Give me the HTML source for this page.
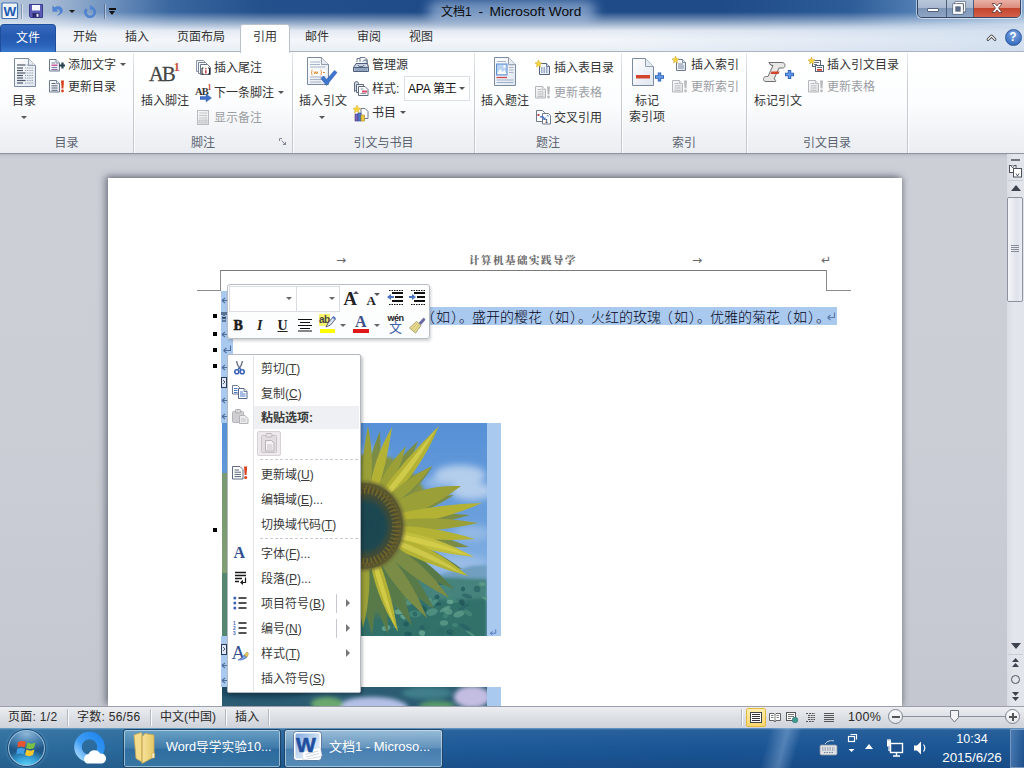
<!DOCTYPE html>
<html lang="zh-CN">
<head>
<meta charset="utf-8">
<title>文档1 - Microsoft Word</title>
<style>
*{box-sizing:border-box;margin:0;padding:0}
html,body{width:1024px;height:768px;overflow:hidden;background:#fff}
body{font-family:"Liberation Sans","Noto Sans CJK SC",sans-serif;font-size:12px;color:#222;position:relative}
.abs{position:absolute}
#titlebar{left:0;top:0;width:1024px;height:54px;
 background:
 linear-gradient(to bottom,rgba(255,255,255,0) 0px,rgba(255,255,255,0) 12px,rgba(240,244,250,.5) 22px,rgba(244,247,251,.93) 31px,#f3f6fa 40px,#e9eef5 52px),
 linear-gradient(to right,#b4c5da 0px,#a6bad3 50px,#6e91be 110px,#3a679f 170px,#24508c 260px,#1f4b88 420px,#1f4b88 720px,#2d5c98 850px,#5682b6 925px,#88aad0 1024px);}
#title{left:0;top:4px;width:1024px;height:16px;line-height:16px;color:#0a0a0a;white-space:nowrap}
#titleglow{left:428px;top:1px;width:168px;height:21px;border-radius:10px;background:rgba(200,220,245,.55);filter:blur(6px)}
#tabs{left:0;top:24px;width:1024px;height:28px}
.tab{position:absolute;top:0;height:28px;line-height:27px;font-size:12px;color:#333;text-align:center}
#filetab{left:0;top:24px;width:56px;height:28px;border-radius:4px 4px 0 0;background:linear-gradient(#3669be,#2559af 45%,#2a63ba 75%,#3a78cc);border:1px solid #1f4f9c;border-bottom:none;color:#fff;font-size:12px;text-align:center;line-height:26px}
#acttab{left:240px;top:24px;width:50px;height:29px;background:#fff;border:1px solid #b9c1cd;border-bottom:none;border-radius:3px 3px 0 0}
#ribbon{left:0;top:51px;width:1024px;height:103px;background:linear-gradient(#ffffff 0,#fcfdfe 50px,#f1f3f6 80px,#eaedf1 101px);border-top:1px solid #aab3c0;border-bottom:1px solid #8f959f}
.gsep{position:absolute;top:53px;width:1px;height:100px;background:linear-gradient(rgba(205,210,217,.5),#c9cdd5 30%,#c3c8d0 85%,#c3c8d0);box-shadow:1px 0 0 rgba(255,255,255,.8)}
.glabel{position:absolute;top:135px;height:16px;line-height:16px;font-size:12px;color:#5a6270;text-align:center}
.rt{position:absolute;font-size:12px;line-height:16px;color:#333;white-space:nowrap}
.dis{color:#9a9da3}
.darr{position:absolute;width:0;height:0;border-left:3px solid transparent;border-right:3px solid transparent;border-top:3px solid #555}
.tab{white-space:nowrap}
#docbg{left:0;top:154px;width:1024px;height:552px;background:linear-gradient(to bottom,#b4b8c1 0,#c6c9d0 2px,#cccfd6 5px,#cbced5 50%,#c4c7cf 100%)}
#page{left:108px;top:178px;width:794px;height:528px;background:#fff;box-shadow:-3px -2px 7px rgba(70,75,92,.6),2px 0 5px rgba(70,75,92,.35)}
#statusbar{left:0;top:706px;width:1024px;height:22px;background:linear-gradient(#eceef1,#dcdfe4 50%,#cfd3da);border-top:1px solid #9aa0ab}
#taskbar{left:0;top:728px;width:1024px;height:40px;background:linear-gradient(rgba(140,185,220,.75) 0,rgba(255,255,255,.06) 2px,rgba(255,255,255,0) 50%,rgba(0,0,30,.12) 100%),linear-gradient(to right,#2c6d9d 0,#27679b 200px,#1d5a98 460px,#1a5595 700px,#1b5694 1024px)}

.hdr{font-family:"Liberation Serif","Noto Serif CJK SC",serif;font-weight:900;font-size:10.500px;color:#707070;letter-spacing:1.500px;line-height:12px}
.mk{font-family:"DejaVu Sans",sans-serif;font-size:12px;line-height:14px;color:#666}
.sel{background:#a9c9ee}
.bl{width:4px;height:4px;background:#000}
.am{position:absolute;left:0;width:9px;height:7px}
.doctx{font-family:"Liberation Sans","Noto Sans CJK SC",sans-serif;font-weight:300;font-size:14px;line-height:18px;color:#05051a;white-space:nowrap;margin-top:1px}
.pg{font-feature-settings:"halt";padding:0 5px;display:inline-block;letter-spacing:1px}

#minitb{background:linear-gradient(#ffffff,#fbfcfd);border:1px solid #b8bcc4;border-radius:3px;box-shadow:1px 2px 3px rgba(0,0,0,.18)}
.cbx{background:#fff;border:1px solid #d9dce1}
.ser{font-family:"Liberation Serif",serif;color:#222}
#ctx{background:#fff;border:1px solid #b4b8c0;border-radius:2px;box-shadow:2px 2px 3px rgba(0,0,0,.22)}
.dsep{height:0;border-top:1px dashed #c9ccd2}
.mi{font-size:12px;line-height:18px;color:#3a3a3a;margin-top:1px;white-space:nowrap}
.rarr{position:absolute;width:0;height:0;border-top:4px solid transparent;border-bottom:4px solid transparent;border-left:4px solid #777}

.st{font-size:12px;line-height:17px;color:#2a2a2a;white-space:nowrap;letter-spacing:.3px}
.ssep{top:709px;width:1px;height:17px;background:#b4b9c3;box-shadow:1px 0 0 #fafbfc}
.zc{width:15px;height:15px;border-radius:50%;border:1px solid #7d838e;background:linear-gradient(#fdfdfe,#e3e6eb)}
.tbtn{height:39px;border:1px solid rgba(20,50,80,.8);border-radius:3px;background:linear-gradient(rgba(150,200,225,.55),rgba(95,150,190,.45) 48%,rgba(60,120,170,.4) 52%,rgba(80,150,190,.45));box-shadow:inset 0 0 0 1px rgba(220,240,250,.55)}
.tbtn.act{background:linear-gradient(rgba(200,225,240,.7),rgba(140,180,210,.62) 48%,rgba(100,150,195,.6) 52%,rgba(120,175,210,.62))}
.tk{font-size:13px;line-height:18px;color:#fff;white-space:nowrap}

#wc{border:1px solid rgba(40,55,80,.85);border-radius:0 0 5px 5px;box-shadow:0 0 0 1px rgba(255,255,255,.55)}
</style>
</head>
<body>
<div id="titlebar" class="abs"></div>
<div id="titleglow" class="abs"></div>
<div class="abs" style="left:600px;top:26px;width:424px;height:25px;background:linear-gradient(to right,rgba(190,208,232,0),rgba(190,208,232,.55))"></div>
<div id="title" class="abs"><span style="position:absolute;left:441px;font-size:12px">文档1</span><span style="position:absolute;left:478.500px;font-size:13.700px">-</span><span style="position:absolute;left:489.500px;font-size:13.700px">Microsoft Word</span></div>
<div id="ribbon" class="abs"></div>
<div id="filetab" class="abs">文件</div>
<div id="acttab" class="abs"></div>
<div id="tabs" class="abs">
 <span class="tab" style="left:72px;width:26px">开始</span>
 <span class="tab" style="left:124px;width:26px">插入</span>
 <span class="tab" style="left:176px;width:50px">页面布局</span>
 <span class="tab" style="left:252px;width:26px">引用</span>
 <span class="tab" style="left:304px;width:26px">邮件</span>
 <span class="tab" style="left:356px;width:26px">审阅</span>
 <span class="tab" style="left:408px;width:26px">视图</span>
</div>

<div class="gsep" style="left:133px"></div>
<div class="gsep" style="left:292px"></div>
<div class="gsep" style="left:474px"></div>
<div class="gsep" style="left:621px"></div>
<div class="gsep" style="left:746px"></div>
<div class="gsep" style="left:907px"></div>
<div class="glabel" style="left:0;width:133px">目录</div>
<div class="glabel" style="left:134px;width:138px">脚注</div>
<div class="glabel" style="left:293px;width:181px">引文与书目</div>
<div class="glabel" style="left:475px;width:146px">题注</div>
<div class="glabel" style="left:622px;width:124px">索引</div>
<div class="glabel" style="left:747px;width:160px">引文目录</div>
<!-- group 1 -->
<div class="rt" style="left:0;width:48px;top:93px;text-align:center">目录</div>
<div class="darr" style="left:21px;top:116px"></div>
<div class="rt" style="left:68px;top:57px">添加文字</div><div class="darr" style="left:120px;top:63px"></div>
<div class="rt" style="left:68px;top:79px">更新目录</div>
<!-- group 2 -->
<div class="rt" style="left:141px;top:93px">插入脚注</div>
<div class="rt" style="left:214px;top:60px">插入尾注</div>
<div class="rt" style="left:214px;top:85px">下一条脚注</div><div class="darr" style="left:278px;top:91px"></div>
<div class="rt dis" style="left:214px;top:110px">显示备注</div>
<!-- group 3 -->
<div class="rt" style="left:299px;top:93px">插入引文</div>
<div class="darr" style="left:319px;top:116px"></div>
<div class="rt" style="left:372px;top:57px">管理源</div>
<div class="rt" style="left:372px;top:81px">样式:</div>
<div class="abs" style="left:404px;top:76px;width:66px;height:25px;border:1px solid #dcdfe5;background:#fff"></div>
<div class="rt" style="left:408px;top:80.500px;font-size:12px;letter-spacing:-.2px;color:#111">APA 第王</div><div class="darr" style="left:459px;top:87px"></div>
<div class="rt" style="left:372px;top:105px">书目</div><div class="darr" style="left:400px;top:111px"></div>
<!-- group 4 -->
<div class="rt" style="left:481px;top:93px">插入题注</div>
<div class="rt" style="left:554px;top:60px">插入表目录</div>
<div class="rt dis" style="left:554px;top:85px">更新表格</div>
<div class="rt" style="left:554px;top:110px">交叉引用</div>
<!-- group 5 -->
<div class="rt" style="left:622px;width:50px;top:93px;text-align:center">标记</div>
<div class="rt" style="left:622px;width:50px;top:109px;text-align:center">索引项</div>
<div class="rt" style="left:691px;top:57px">插入索引</div>
<div class="rt dis" style="left:691px;top:79px">更新索引</div>
<!-- group 6 -->
<div class="rt" style="left:754px;top:93px">标记引文</div>
<div class="rt" style="left:827px;top:57px">插入引文目录</div>
<div class="rt dis" style="left:827px;top:79px">更新表格</div>
<!--RI_START--><svg width="0" height="0" style="position:absolute"><defs><linearGradient id="pg" x1="0" y1="0" x2="1" y2="1"><stop offset="0" stop-color="#ffffff"/><stop offset="1" stop-color="#dfe6f0"/></linearGradient><linearGradient id="pgg" x1="0" y1="0" x2="1" y2="1"><stop offset="0" stop-color="#fafafa"/><stop offset="1" stop-color="#e2e2e4"/></linearGradient></defs></svg>
<svg class="abs" style="left:14px;top:58px" width="22" height="29" viewBox="0 0 22 29"><path d="M.5 .5H14.5L21.5 7.5V28.5H.5z" fill="url(#pg)" stroke="#7b8a9e" stroke-width="1"/><path d="M14.5 .5V7.5H21.5" fill="#e6ebf2" stroke="#7b8a9e" stroke-width="0.8"/><path d="M3 7H11" stroke="#4a5666" stroke-width="1.200"/><path d="M11 7H19" stroke="#8c98a8" stroke-width="1" stroke-dasharray="1.200 1"/><path d="M3 10H9" stroke="#4a5666" stroke-width="1.200"/><path d="M11 10H19" stroke="#8c98a8" stroke-width="1" stroke-dasharray="1.200 1"/><path d="M3 12.5H9" stroke="#4a5666" stroke-width="1.200"/><path d="M11 12.5H19" stroke="#8c98a8" stroke-width="1" stroke-dasharray="1.200 1"/><path d="M3 15H11" stroke="#4a5666" stroke-width="1.200"/><path d="M11 15H19" stroke="#8c98a8" stroke-width="1" stroke-dasharray="1.200 1"/><path d="M3 17.5H9" stroke="#4a5666" stroke-width="1.200"/><path d="M11 17.5H19" stroke="#8c98a8" stroke-width="1" stroke-dasharray="1.200 1"/><path d="M3 20H9" stroke="#4a5666" stroke-width="1.200"/><path d="M11 20H19" stroke="#8c98a8" stroke-width="1" stroke-dasharray="1.200 1"/><path d="M3 22.5H11" stroke="#4a5666" stroke-width="1.200"/><path d="M11 22.5H19" stroke="#8c98a8" stroke-width="1" stroke-dasharray="1.200 1"/><path d="M3 25H9" stroke="#4a5666" stroke-width="1.200"/><path d="M11 25H19" stroke="#8c98a8" stroke-width="1" stroke-dasharray="1.200 1"/></svg>
<svg class="abs" style="left:49px;top:59px" width="17" height="13" viewBox="0 0 17 13"><path d="M.5 .5H7.0L10.5 4.0V12.0H.5z" fill="url(#pg)" stroke="#6d7a8c" stroke-width="1"/><path d="M7.0 .5V4.0H10.5" fill="#e6ebf2" stroke="#6d7a8c" stroke-width="0.8"/><path d="M2.500 4H6M2.500 8.500H8" stroke="#7a86a0" stroke-width="1"/><path d="M2.500 6.200H8.500" stroke="#c43a8a" stroke-width="1.200"/><path d="M2.500 10.500H8.500" stroke="#8a6ab0" stroke-width="1"/><path d="M10 6.500h6M13.500 3.500v6" stroke="#27424e" stroke-width="2.200"/></svg>
<svg class="abs" style="left:49px;top:80px" width="16" height="13" viewBox="0 0 16 13"><path d="M.5 .5H7.5L10.5 3.5V12.0H.5z" fill="url(#pg)" stroke="#6d7a8c" stroke-width="1"/><path d="M7.5 .5V3.5H10.5" fill="#e6ebf2" stroke="#6d7a8c" stroke-width="0.8"/><path d="M2.500 3.500H6.500M2.500 5.800H8.500M2.500 8H8.500M2.500 10.300H8.500" stroke="#5a6678" stroke-width="1"/><path d="M12 .5h3l-.6 8h-1.800z" fill="#d8431f"/><circle cx="13.500" cy="11" r="1.400" fill="#d8431f"/></svg>
<div class="abs ser" style="left:149px;top:62px;font-size:20.500px;line-height:24px;letter-spacing:-1.800px;color:#444;-webkit-text-stroke:.3px #444">AB</div>
<div class="abs ser" style="left:173.500px;top:59.500px;font-size:13px;line-height:14px;font-weight:700;color:#cc5540">1</div>
<svg class="abs" style="left:196px;top:60px" width="16" height="16" viewBox="0 0 16 16"><path d="M.5 .5h7l2 2v9h-9z" fill="#f2f4f8" stroke="#8a94a6" stroke-width="1"/><path d="M2.500 2.500h7l2 2v9h-9z" fill="#f6f8fb" stroke="#7a8698" stroke-width="1"/><path d="M4.500 4.500h7l3 3v7h-10z" fill="#fff" stroke="#6a7688" stroke-width="1"/><path d="M7.500 8h-1.500v6h1.500M12 8h1.500v6h-1.500" fill="none" stroke="#222" stroke-width="1"/><path d="M9.800 10.200v3.200" stroke="#b83030" stroke-width="1.400"/><circle cx="9.800" cy="8.700" r=".8" fill="#b83030"/></svg>
<div class="abs ser" style="left:195px;top:86px;font-size:10.500px;line-height:12px;font-weight:700;letter-spacing:-.8px;color:#333">AB</div>
<div class="abs ser" style="left:207.500px;top:83px;font-size:8px;line-height:9px;font-weight:700;color:#c8482e">1</div>
<svg class="abs" style="left:200px;top:94px" width="12" height="8" viewBox="0 0 12 8"><path d="M0 2.500h6V0l5.500 4L6 8V5.500H0z" fill="#3f72c8" stroke="#2a58a8" stroke-width=".4"/></svg>
<svg class="abs" style="left:197px;top:110px" width="12" height="15" viewBox="0 0 12 15"><rect x=".5" y=".5" width="11" height="14" fill="url(#pgg)" stroke="#b9bbc0"/><path d="M2 3h8M2 5.500h8M2 8h8" stroke="#c4c6ca" stroke-width="1"/><rect x="2" y="10" width="8" height="3" fill="#d6d8dc" stroke="#b9bbc0" stroke-width=".6"/></svg>
<svg class="abs" style="left:279px;top:138px" width="8" height="8" viewBox="0 0 8 8"><path d="M.5 3V.5H3" fill="none" stroke="#7f8794" stroke-width="1"/><path d="M7 3.500v3.500H3.500z" fill="#7f8794"/><path d="M2.500 2.500l3.500 3.500" stroke="#7f8794" stroke-width="1"/></svg>
<svg class="abs" style="left:307px;top:57px" width="31" height="31" viewBox="0 0 31 31"><path d="M.5 .5H14.5L21.5 7.5V27.5H.5z" fill="url(#pg)" stroke="#7b8a9e" stroke-width="1"/><path d="M14.5 .5V7.5H21.5" fill="#e6ebf2" stroke="#7b8a9e" stroke-width="0.8"/><path d="M3 5H13M3 7.500H13M3 10H18M3 20H18M3 22.500H18M3 25H14" stroke="#a9b4c4" stroke-width="1"/><rect x="2.500" y="12.500" width="17" height="6" fill="#fff"/><path d="M5.500 13c-1 0-1 1-.7 1.500.3.600-.3 1-.8 1 .5 0 1.100.4.800 1-.3.500-.3 1.500.7 1.500M13.500 13c1 0 1 1 .7 1.500-.3.600.3 1 .8 1-.5 0-1.100.4-.8 1 .3.500.3 1.500-.7 1.500M6.800 14.500l1 2.500 1-2.500 1 2.500 1-2.500M16 15.500h2" fill="none" stroke="#e0862a" stroke-width=".9"/><path d="M14 21.500l2.500-2.500 3 3.500 8-9 2.500 2-10.500 13z" fill="#3f77cf" stroke="#2a5cae" stroke-width=".6"/></svg>
<svg class="abs" style="left:353px;top:57px" width="16" height="16" viewBox="0 0 16 16"><path d="M4 5V1.500h6l2 2V7" fill="#fff" stroke="#6d7a8e" stroke-width="1"/><path d="M7 5V.5h5l2 2v5" fill="#f4f6fa" stroke="#6d7a8e" stroke-width="1"/><path d="M10 4.500l1.500-1.500h2.500v5" fill="#dfe5ee" stroke="#56647a" stroke-width="1"/><path d="M3 6.500h11.500l1 4v4h-15v-4z" fill="#c7d2e2" stroke="#51607a" stroke-width="1"/><path d="M.5 10.500h15" stroke="#51607a" stroke-width="1"/><rect x="1.500" y="11" width="13" height="3" fill="#8fa2be"/><path d="M5 8l1 1.500h4l1-1.500" fill="none" stroke="#51607a" stroke-width=".9"/></svg>
<svg class="abs" style="left:353px;top:81px" width="16" height="16" viewBox="0 0 16 16"><path d="M1.500 1.500c2-1.500 4-1 4 1v8c-1.500-1-3-1-4 0z" fill="#d3d9e4" stroke="#5e6a7e" stroke-width="1"/><path d="M3.500 3.500h7v8h-7z" fill="#eef1f6" stroke="#5e6a7e" stroke-width="1"/><path d="M5.500 5.500H12l3 3v6H5.500z" fill="#fff" stroke="#5e6a7e" stroke-width="1"/><path d="M7.500 8h3M7.500 12.500h5.500" stroke="#8a94a6" stroke-width="1"/><rect x="9" y="9.500" width="5" height="2" fill="#d64a6a"/></svg>
<svg class="abs" style="left:353px;top:105px" width="16" height="17" viewBox="0 0 16 17"><path d="M8 3.500h4l3 3v7H8z" fill="#fff" stroke="#6d7a8e" stroke-width="1"/><path d="M4 0l1 2.700L8 3.500 5.500 5l.5 3L4 6 1.500 8 2 5 0 3.500l3-.8z" fill="#f5d640" stroke="#d8a820" stroke-width=".5"/><rect x="2" y="9" width="3" height="7" fill="#7a62b8" stroke="#4a3a88" stroke-width=".6"/><rect x="5" y="8" width="3" height="8" fill="#4f78c8" stroke="#2f4f98" stroke-width=".6"/><rect x="8" y="10" width="3.500" height="6" fill="#e8c840" stroke="#a8882a" stroke-width=".6"/></svg>
<svg class="abs" style="left:494px;top:57px" width="22" height="29" viewBox="0 0 22 29"><path d="M.5 .5H14.5L21.5 7.5V28.5H.5z" fill="url(#pg)" stroke="#7b8a9e" stroke-width="1"/><path d="M14.5 .5V7.5H21.5" fill="#e6ebf2" stroke="#7b8a9e" stroke-width="0.8"/><path d="M3 4.500H12" stroke="#a9b4c4" stroke-width="1"/><rect x="2.500" y="7" width="10.500" height="11" fill="#b9d4f2" stroke="#5f8fd0" stroke-width="1"/><path d="M3 17l3-5 2.500 3 2-2 2 4z" fill="#fff" opacity=".9"/><circle cx="10.500" cy="9.500" r="1.200" fill="#fff"/><path d="M15 8H19.500M15 10.500H19.500M15 13H19.500M15 15.500H19.500" stroke="#a9b4c4" stroke-width="1"/><path d="M2.500 20.500H13" stroke="#c84a4a" stroke-width="1.300"/><path d="M2.500 23H19.500M2.500 25.500H19.500" stroke="#9fb0cc" stroke-width="1"/></svg>
<svg class="abs" style="left:535px;top:60px" width="15" height="15" viewBox="0 0 15 15"><path d="M4.500 3.500h7l3 3v8h-10z" fill="url(#pg)" stroke="#4f6080" stroke-width="1"/><path d="M11.500 3.500v3h3" fill="#dfe6f0" stroke="#4f6080" stroke-width=".8"/><path d="M6 8H13M6 10H13M6 12H13" stroke="#4f6a9a" stroke-width="1" stroke-dasharray="1.500 1"/><path d="M3.500 0l.9 2.400L7 3l-2 1.600L5.500 7 3.500 5.500 1.500 7 2 4.600 0 3l2.600-.6z" fill="#f5d640" stroke="#d0a020" stroke-width=".5"/></svg>
<svg class="abs" style="left:535px;top:86px" width="16" height="13" viewBox="0 0 16 13"><path d="M.5 .5H7.5L10.5 3.5V12.0H.5z" fill="url(#pgg)" stroke="#b4b6ba" stroke-width="1"/><path d="M7.5 .5V3.5H10.5" fill="#e6ebf2" stroke="#b4b6ba" stroke-width="0.8"/><path d="M2.500 3.500H6.500M2.500 5.800H8.500M2.500 8H8.500M2.500 10.300H8.500" stroke="#b9bbbf" stroke-width="1"/><path d="M12 .5h3l-.6 8h-1.800z" fill="#b9b9bb"/><circle cx="13.500" cy="11" r="1.400" fill="#b9b9bb"/></svg>
<svg class="abs" style="left:536px;top:110px" width="15" height="15" viewBox="0 0 15 15"><path d="M.5 .5h6l2 2v9h-8z" fill="#fff" stroke="#6d7a8e" stroke-width="1"/><path d="M6.500 3.500h6l2 2v8.500h-8z" fill="#fff" stroke="#6d7a8e" stroke-width="1"/><rect x="1.500" y="4" width="2" height="2" fill="#c43a4a"/><path d="M4 6.500c2-1 3.500-.5 4.500 1.500l1.200-.7-.4 3-2.800-1 1.100-.7c-.8-1.200-2-1.500-3.600-.8z" fill="#3f72c8"/><text x="10.500" y="13" font-family="Liberation Sans,sans-serif" font-size="5" fill="#223" font-weight="700" text-anchor="middle">1</text><path d="M11 5l1.500 1.500M12.500 5L11 6.500" stroke="#3f72c8" stroke-width=".7"/></svg>
<svg class="abs" style="left:632px;top:58px" width="33" height="29" viewBox="0 0 33 29"><path d="M.5 .5H13.5L21.5 8.5V27.5H.5z" fill="url(#pg)" stroke="#7b8a9e" stroke-width="1"/><path d="M13.5 .5V8.5H21.5" fill="#e6ebf2" stroke="#7b8a9e" stroke-width="0.8"/><rect x="4" y="17" width="14" height="3.500" fill="#d2452c"/><path d="M23 19h9M27.500 14.500v9" stroke="#2a5cae" stroke-width="3.400"/><path d="M23.800 19h7.400M27.500 15.300v7.400" stroke="#5f98e8" stroke-width="1.800"/></svg>
<svg class="abs" style="left:672px;top:56px" width="15" height="16" viewBox="0 0 15 16"><path d="M4.500 3.500h6l3 3v8h-9z" fill="url(#pg)" stroke="#6d7a8e" stroke-width="1"/><path d="M10.500 3.500v3h3" fill="#dfe6f0" stroke="#6d7a8e" stroke-width=".8"/><path d="M6 8H11M6 10H12M6 12H12" stroke="#7a88a0" stroke-width="1"/><path d="M3.500 0l.9 2.400L7 3l-2 1.600L5.500 7 3.500 5.500 1.500 7 2 4.600 0 3l2.600-.6z" fill="#f5d640" stroke="#d0a020" stroke-width=".5"/></svg>
<svg class="abs" style="left:672px;top:80px" width="16" height="13" viewBox="0 0 16 13"><path d="M.5 .5H7.5L10.5 3.5V12.0H.5z" fill="url(#pgg)" stroke="#b4b6ba" stroke-width="1"/><path d="M7.5 .5V3.5H10.5" fill="#e6ebf2" stroke="#b4b6ba" stroke-width="0.8"/><path d="M2.500 3.500H6.500M2.500 5.800H8.500M2.500 8H8.500M2.500 10.300H8.500" stroke="#b9bbbf" stroke-width="1"/><path d="M12 .5h3l-.6 8h-1.800z" fill="#b9b9bb"/><circle cx="13.500" cy="11" r="1.400" fill="#b9b9bb"/></svg>
<svg class="abs" style="left:763px;top:61px" width="32" height="22" viewBox="0 0 32 22"><path d="M6 1.500h13c2 0 3 1.500 3 3s-1 2.500-2.500 2.500H16l-5 11c1.500.3 2 1.500 1.500 2.500H3c-2 0-3-1.500-2.500-3s1.500-2 3-2h1.500l5-11c-1.500 0-2.500-.5-4-3z" fill="#e9e7e4" stroke="#6f6f72" stroke-width="1"/><path d="M9.500 4.500c-1.500 0-2.500-.5-3.500-3" fill="none" stroke="#6f6f72" stroke-width="1"/><path d="M8.500 10.500h8l-1 2.500h-8z" fill="#d2452c"/><path d="M22 13.500h9M26.500 9v9" stroke="#2a5cae" stroke-width="3.400"/><path d="M22.800 13.500h7.400M26.500 9.800v7.400" stroke="#5f98e8" stroke-width="1.800"/></svg>
<svg class="abs" style="left:808px;top:57px" width="16" height="16" viewBox="0 0 16 16"><rect x="4.500" y="3.500" width="8" height="6" fill="#fff" stroke="#56647a" stroke-width="1"/><path d="M6 5.500h5M6 7.500h3" stroke="#56647a" stroke-width=".9"/><rect x="7.500" y="8.500" width="8" height="6" fill="#fff" stroke="#56647a" stroke-width="1"/><path d="M9 10.500h5" stroke="#56647a" stroke-width=".9"/><rect x="9" y="12" width="5" height="1.800" fill="#d2452c"/><path d="M3.500 0l.9 2.400L7 3l-2 1.600L5.500 7 3.500 5.500 1.500 7 2 4.600 0 3l2.600-.6z" fill="#f5d640" stroke="#d0a020" stroke-width=".5"/></svg>
<svg class="abs" style="left:808px;top:80px" width="16" height="13" viewBox="0 0 16 13"><path d="M.5 .5H7.5L10.5 3.5V12.0H.5z" fill="url(#pgg)" stroke="#b4b6ba" stroke-width="1"/><path d="M7.5 .5V3.5H10.5" fill="#e6ebf2" stroke="#b4b6ba" stroke-width="0.8"/><path d="M2.500 3.500H6.500M2.500 5.800H8.500M2.500 8H8.500M2.500 10.300H8.500" stroke="#b9bbbf" stroke-width="1"/><path d="M12 .5h3l-.6 8h-1.800z" fill="#b9b9bb"/><circle cx="13.500" cy="11" r="1.400" fill="#b9b9bb"/></svg>
<!--RI_END-->
<!-- QAT -->
<svg class="abs" style="left:1px;top:2px" width="18" height="18" viewBox="0 0 18 18"><rect x="1" y="1" width="15.500" height="15.500" rx="1" fill="#fdfefe" stroke="#3b6fb2" stroke-width="1.200"/><rect x="2.500" y="2.500" width="12.500" height="12.500" fill="#eaf1fa"/><text x="8.800" y="14.300" font-family="Liberation Sans,sans-serif" font-weight="700" font-size="13.500" text-anchor="middle" fill="#1f5bb0">W</text></svg>
<div class="abs" style="left:21px;top:4px;width:1px;height:15px;background:rgba(90,110,140,.55);box-shadow:1px 0 0 rgba(255,255,255,.5)"></div>
<svg class="abs" style="left:28px;top:3px" width="16" height="16" viewBox="0 0 16 16"><path d="M1.500 1.500h13v13h-12l-1-1z" fill="#5a5ab4" stroke="#3a3a8a" stroke-width="1"/><rect x="4" y="2" width="8" height="5.500" fill="#f4f6fc"/><rect x="4.500" y="10" width="7" height="4.500" fill="#2a2a6a"/><rect x="8.500" y="10.800" width="2" height="3" fill="#e8e8f8"/></svg>
<svg class="abs" style="left:51.500px;top:5px" width="12.500" height="12.500" viewBox="0 0 15 15"><path d="M1 1.500v6h6l-2.300-2.200c2-1.300 5-.4 5 2.400 0 2-1.200 3.500-3.200 4.600 4-1 6-3 6-5.600 0-4.500-5.500-6.300-9.300-3.400z" fill="#4f86d8" stroke="#3568b8" stroke-width=".5"/></svg>
<div class="darr" style="left:69px;top:10px;border-top-color:#1a1a1a"></div>
<svg class="abs" style="left:83.500px;top:4.500px" width="13" height="13" viewBox="0 0 15 15"><path d="M8.500 1v3.300a4.200 4.200 0 1 1-4.800 1.400l-1.900-1.300a6.500 6.500 0 1 0 6.700-2.400V1z" fill="#4f86d8" stroke="#3568b8" stroke-width=".4"/><path d="M7 0l4 3-4 3z" fill="#4f86d8"/></svg>
<div class="abs" style="left:104px;top:4px;width:1px;height:15px;background:rgba(70,90,120,.6);box-shadow:1px 0 0 rgba(255,255,255,.4)"></div>
<div class="abs" style="left:109px;top:8px;width:7px;height:1.500px;background:#111"></div>
<div class="darr" style="left:109px;top:11px;border-top-color:#111;border-left-width:3.500px;border-right-width:3.500px;border-top-width:4px"></div>
<!-- window controls -->
<div class="abs" id="wc" style="left:917px;top:-2px;width:104px;height:20px"></div>
<div class="abs" style="left:918px;top:0;width:28px;height:17px;background:linear-gradient(#b9c7da 0,#a9b9d0 45%,#7e96b8 50%,#8ea5c4 100%);border-radius:0 0 0 4px"></div>
<div class="abs" style="left:947px;top:0;width:26px;height:17px;background:linear-gradient(#b9c7da 0,#a9b9d0 45%,#7e96b8 50%,#8ea5c4 100%)"></div>
<div class="abs" style="left:974px;top:0;width:46px;height:17px;background:linear-gradient(#eab0a4 0,#dc8d7e 45%,#c4442c 50%,#d2604a 100%);border-radius:0 0 4px 0"></div>
<div class="abs" style="left:946px;top:0;width:1px;height:17px;background:#4d5f7a"></div>
<div class="abs" style="left:973px;top:0;width:1px;height:17px;background:#4d5f7a"></div>
<div class="abs" style="left:927px;top:8px;width:12px;height:4px;background:#fff;border:1px solid #55637a;border-radius:1px"></div>
<svg class="abs" style="left:951px;top:1px" width="17" height="14" viewBox="0 0 17 14"><path d="M5 3V1.800h8.500v8h-2" fill="none" stroke="#4a586e" stroke-width="2.800"/><path d="M5 3V1.800h8.500v8h-2" fill="none" stroke="#fff" stroke-width="1.600"/><rect x="3.200" y="4.200" width="7.600" height="7.600" fill="none" stroke="#4a586e" stroke-width="3.400"/><rect x="3.200" y="4.200" width="7.600" height="7.600" fill="#5a6a84" stroke="#fff" stroke-width="2.200"/></svg>
<svg class="abs" style="left:990px;top:2px" width="14" height="12" viewBox="0 0 14 12"><path d="M2 1.500h3l2 2.500 2-2.500h3l-3.500 4.500 3.500 4.500h-3l-2-2.500-2 2.500h-3l3.500-4.500z" fill="#fff" stroke="#5a3a3a" stroke-width=".8"/></svg>
<!-- help / collapse -->
<svg class="abs" style="left:986px;top:33px" width="11" height="9" viewBox="0 0 11 9"><path d="M2 6.500l3.500-3.500 3.500 3.500" fill="none" stroke="#333" stroke-width="2.800" stroke-linejoin="round" stroke-linecap="round"/><path d="M2 6.500l3.500-3.500 3.500 3.500" fill="none" stroke="#fff" stroke-width="1.100" stroke-linejoin="round" stroke-linecap="round"/></svg>
<div class="abs" style="left:1004.500px;top:28.500px;width:17px;height:17px;border-radius:50%;background:radial-gradient(circle at 50% 30%,#7fa8e0,#3f73c4 70%,#2f5fae);border:1px solid #2f5a9e;color:#fff;font-weight:700;font-size:12px;line-height:14px;text-align:center">?</div>

<div id="docbg" class="abs"></div>
<div id="page" class="abs"></div>

<!-- header -->
<div class="abs hdr" style="left:469px;top:255px">计算机基础实践导学</div>
<div class="abs mk" style="left:336px;top:253px">→</div>
<div class="abs mk" style="left:692px;top:253px">→</div>
<div class="abs mk" style="left:821px;top:253px">↵</div>
<div class="abs" style="left:220px;top:270px;width:607px;height:1px;background:#7a7a7a"></div>
<div class="abs" style="left:220px;top:270px;width:1px;height:21px;background:#8a8a8a"></div>
<div class="abs" style="left:197px;top:290px;width:24px;height:1px;background:#8a8a8a"></div>
<div class="abs" style="left:826px;top:270px;width:1px;height:21px;background:#8a8a8a"></div>
<div class="abs" style="left:826px;top:290px;width:25px;height:1px;background:#8a8a8a"></div>
<!-- selection -->
<div class="abs sel" style="left:221px;top:291px;width:7px;height:132px"></div>
<div class="abs sel" style="left:221px;top:307px;width:616px;height:18px"></div>
<div class="abs sel" style="left:221px;top:339px;width:12px;height:17px"></div>
<div class="abs sel" style="left:221px;top:636px;width:7px;height:51px"></div>
<div class="abs sel" style="left:222px;top:423px;width:279px;height:213px"></div>
<div class="abs sel" style="left:222px;top:687px;width:279px;height:19px"></div>
<div class="abs" style="left:221px;top:291px;width:6px;height:396px;overflow:hidden"><svg class="am" style="top:6.0px" viewBox="0 0 9 7"><path d="M1 3.500h8M1 3.500l3-2.500M1 3.500l3 2.500" stroke="#4f6f9f" stroke-width="1.100" fill="none"/></svg><svg class="am" style="top:39.5px" viewBox="0 0 9 7"><path d="M1 3.500h8M1 3.500l3-2.500M1 3.500l3 2.500" stroke="#4f6f9f" stroke-width="1.100" fill="none"/></svg><svg class="am" style="top:72.5px" viewBox="0 0 9 7"><path d="M1 3.500h8M1 3.500l3-2.500M1 3.500l3 2.500" stroke="#4f6f9f" stroke-width="1.100" fill="none"/></svg><svg class="am" style="top:106.0px" viewBox="0 0 9 7"><path d="M1 3.500h8M1 3.500l3-2.500M1 3.500l3 2.500" stroke="#4f6f9f" stroke-width="1.100" fill="none"/></svg><svg class="am" style="top:121.5px" viewBox="0 0 9 7"><path d="M1 3.500h8M1 3.500l3-2.500M1 3.500l3 2.500" stroke="#4f6f9f" stroke-width="1.100" fill="none"/></svg><svg class="am" style="top:371.0px" viewBox="0 0 9 7"><path d="M1 3.500h8M1 3.500l3-2.500M1 3.500l3 2.500" stroke="#4f6f9f" stroke-width="1.100" fill="none"/></svg><svg class="am" style="top:386.0px" viewBox="0 0 9 7"><path d="M1 3.500h8M1 3.500l3-2.500M1 3.500l3 2.500" stroke="#4f6f9f" stroke-width="1.100" fill="none"/></svg><svg class="am" style="top:86px;width:6px;height:11px" viewBox="0 0 6 11"><rect x=".5" y=".5" width="5" height="10" fill="#dfe8f4" stroke="#2a3a5a" stroke-width="1"/><path d="M2 3l2 2-2 2" stroke="#2a3a5a" fill="none" stroke-width=".8"/></svg><svg class="am" style="top:353px;width:6px;height:11px" viewBox="0 0 6 11"><rect x=".5" y=".5" width="5" height="10" fill="#dfe8f4" stroke="#2a3a5a" stroke-width="1"/><path d="M2 3l2 2-2 2" stroke="#2a3a5a" fill="none" stroke-width=".8"/></svg><svg class="am" style="top:20px;width:6px;height:12px" viewBox="0 0 6 12"><path d="M1 1v3M3 1v4M5 1v3M1 6l4 2M5 6l-4 2M1 10h4" stroke="#1a2a4a" stroke-width="1.100" fill="none"/></svg></div>
<!-- bullets -->
<div class="abs bl" style="left:213px;top:314px"></div>
<div class="abs bl" style="left:213px;top:332px"></div>
<div class="abs bl" style="left:213px;top:348px"></div>
<div class="abs bl" style="left:213px;top:364px"></div>
<div class="abs bl" style="left:213px;top:528px"></div>
<!-- text line -->
<div class="abs doctx" style="left:423px;top:307px"><span class="pg">（如）。</span></div>
<div class="abs doctx" style="left:472px;top:307px">盛开的樱花</div>
<div class="abs doctx" style="left:542px;top:307px"><span class="pg">（如）。</span></div>
<div class="abs doctx" style="left:591px;top:307px">火红的玫瑰</div>
<div class="abs doctx" style="left:661px;top:307px"><span class="pg">（如）。</span></div>
<div class="abs doctx" style="left:710px;top:307px">优雅的菊花</div>
<div class="abs doctx" style="left:780px;top:307px"><span class="pg">（如）。</span></div>
<svg class="abs" style="left:826px;top:312px" width="10" height="9" viewBox="0 0 10 9"><path d="M8.500 .5v5h-7M1.500 5.500l3-2.500M1.500 5.500l3 2.500" stroke="#5f7aa8" stroke-width="1.100" fill="none"/></svg>
<svg class="abs" style="left:222px;top:345px" width="10" height="9" viewBox="0 0 10 9"><path d="M8.500 .5v5h-7M1.500 5.500l3-2.500M1.500 5.500l3 2.500" stroke="#4f6f9f" stroke-width="1.100" fill="none"/></svg>
<svg class="abs" style="left:488.500px;top:629px" width="8" height="7" viewBox="0 0 10 9"><path d="M8.500 .5v5h-7M1.500 5.500l3-2.500M1.500 5.500l3 2.500" stroke="#4a6fb4" stroke-width="1.100" fill="none"/></svg>
<!-- image 1 -->
<svg class="abs" style="left:222px;top:423px" width="265" height="213" viewBox="0 0 265 213">
<defs><linearGradient id="sky" x1="0" y1="0" x2="0" y2="1"><stop offset="0" stop-color="#5690d6"/><stop offset=".45" stop-color="#6a9fdc"/><stop offset=".72" stop-color="#8ab4e4"/></linearGradient><radialGradient id="disc" cx=".5" cy=".5" r=".5"><stop offset="0" stop-color="#1a4450"/><stop offset=".52" stop-color="#1e4850"/><stop offset=".66" stop-color="#3a4a3a"/><stop offset=".85" stop-color="#4f4e2c"/><stop offset="1" stop-color="#5e5c30"/></radialGradient><filter id="bl"><feGaussianBlur stdDeviation="3.500"/></filter><filter id="bl1"><feGaussianBlur stdDeviation=".6"/></filter><filter id="bl2"><feGaussianBlur stdDeviation="1.500"/></filter></defs>
<rect width="265" height="213" fill="url(#sky)"/>
<g filter="url(#bl)" fill="#b3cdec"><ellipse cx="238" cy="52" rx="26" ry="10"/><ellipse cx="250" cy="68" rx="22" ry="9"/><ellipse cx="215" cy="60" rx="14" ry="6" opacity=".6"/><ellipse cx="150" cy="30" rx="16" ry="6" opacity=".45"/><ellipse cx="250" cy="110" rx="18" ry="8" opacity=".5"/><ellipse cx="235" cy="140" rx="30" ry="8" opacity=".45"/></g>
<g filter="url(#bl2)"><path d="M215 152l20-5 15-4 15-1v25h-60z" fill="#6f9fc0"/><path d="M150 160c30-8 60-6 115-4v60H120z" fill="#44837c"/><path d="M120 180c40-10 90 0 145-5v40H110z" fill="#33706a"/></g>
<g filter="url(#bl1)">
<ellipse cx="177" cy="189" rx="6.6" ry="2.2" fill="#62a08c" opacity=".7" transform="rotate(6 177 189)"/>
<ellipse cx="220" cy="208" rx="3.3" ry="1.6" fill="#2f6e66" opacity=".7" transform="rotate(40 220 208)"/>
<ellipse cx="204" cy="204" rx="4.0" ry="3.2" fill="#2f6e66" opacity=".7" transform="rotate(-21 204 204)"/>
<ellipse cx="167" cy="209" rx="5.7" ry="2.7" fill="#2f6e66" opacity=".7" transform="rotate(-35 167 209)"/>
<ellipse cx="237" cy="191" rx="5.9" ry="3.1" fill="#62a08c" opacity=".7" transform="rotate(-18 237 191)"/>
<ellipse cx="218" cy="209" rx="5.6" ry="3.3" fill="#2f6e66" opacity=".7" transform="rotate(-8 218 209)"/>
<ellipse cx="242" cy="184" rx="6.4" ry="1.2" fill="#275f62" opacity=".7" transform="rotate(-29 242 184)"/>
<ellipse cx="175" cy="211" rx="5.9" ry="3.1" fill="#2f6e66" opacity=".7" transform="rotate(-6 175 211)"/>
<ellipse cx="246" cy="190" rx="4.9" ry="2.5" fill="#478a7a" opacity=".7" transform="rotate(32 246 190)"/>
<ellipse cx="228" cy="209" rx="3.4" ry="2.5" fill="#1f5458" opacity=".7" transform="rotate(16 228 209)"/>
<ellipse cx="230" cy="177" rx="6.5" ry="2.4" fill="#478a7a" opacity=".7" transform="rotate(17 230 177)"/>
<ellipse cx="174" cy="204" rx="3.3" ry="1.3" fill="#478a7a" opacity=".7" transform="rotate(-1 174 204)"/>
<ellipse cx="223" cy="186" rx="6.0" ry="2.0" fill="#62a08c" opacity=".7" transform="rotate(-28 223 186)"/>
<ellipse cx="184" cy="201" rx="2.6" ry="2.5" fill="#1f5458" opacity=".7" transform="rotate(21 184 201)"/>
<ellipse cx="193" cy="191" rx="6.4" ry="3.5" fill="#478a7a" opacity=".7" transform="rotate(0 193 191)"/>
<ellipse cx="265" cy="176" rx="2.5" ry="2.3" fill="#5a9a88" opacity=".7" transform="rotate(36 265 176)"/>
<ellipse cx="262" cy="175" rx="2.8" ry="1.1" fill="#62a08c" opacity=".7" transform="rotate(29 262 175)"/>
<ellipse cx="186" cy="211" rx="3.9" ry="2.2" fill="#1f5458" opacity=".7" transform="rotate(2 186 211)"/>
<ellipse cx="224" cy="192" rx="2.5" ry="3.4" fill="#478a7a" opacity=".7" transform="rotate(25 224 192)"/>
<ellipse cx="181" cy="194" rx="3.2" ry="1.8" fill="#72b09a" opacity=".7" transform="rotate(38 181 194)"/>
<ellipse cx="210" cy="189" rx="5.9" ry="3.5" fill="#5a9a88" opacity=".7" transform="rotate(-15 210 189)"/>
<ellipse cx="193" cy="191" rx="2.3" ry="2.6" fill="#275f62" opacity=".7" transform="rotate(-3 193 191)"/>
<ellipse cx="228" cy="179" rx="3.4" ry="2.2" fill="#72b09a" opacity=".7" transform="rotate(7 228 179)"/>
<ellipse cx="260" cy="161" rx="3.3" ry="2.1" fill="#62a08c" opacity=".7" transform="rotate(7 260 161)"/>
<ellipse cx="187" cy="179" rx="5.8" ry="3.1" fill="#62a08c" opacity=".7" transform="rotate(-19 187 179)"/>
<ellipse cx="241" cy="166" rx="2.1" ry="2.4" fill="#1f5458" opacity=".7" transform="rotate(19 241 166)"/>
<ellipse cx="186" cy="172" rx="3.3" ry="1.8" fill="#1f5458" opacity=".7" transform="rotate(14 186 172)"/>
<ellipse cx="225" cy="165" rx="3.6" ry="1.8" fill="#478a7a" opacity=".7" transform="rotate(27 225 165)"/>
<ellipse cx="200" cy="205" rx="2.4" ry="2.9" fill="#275f62" opacity=".7" transform="rotate(-23 200 205)"/>
<ellipse cx="215" cy="174" rx="2.6" ry="2.3" fill="#1f5458" opacity=".7" transform="rotate(-25 215 174)"/>
<ellipse cx="243" cy="204" rx="6.3" ry="1.9" fill="#275f62" opacity=".7" transform="rotate(26 243 204)"/>
<ellipse cx="160" cy="193" rx="2.6" ry="1.7" fill="#478a7a" opacity=".7" transform="rotate(24 160 193)"/>
<ellipse cx="181" cy="178" rx="3.5" ry="2.4" fill="#2f6e66" opacity=".7" transform="rotate(-37 181 178)"/>
<ellipse cx="198" cy="171" rx="6.7" ry="3.2" fill="#2f6e66" opacity=".7" transform="rotate(39 198 171)"/>
<ellipse cx="200" cy="210" rx="3.1" ry="2.9" fill="#72b09a" opacity=".7" transform="rotate(27 200 210)"/>
<ellipse cx="226" cy="188" rx="4.7" ry="3.2" fill="#62a08c" opacity=".7" transform="rotate(29 226 188)"/>
<ellipse cx="249" cy="211" rx="6.1" ry="1.1" fill="#5a9a88" opacity=".7" transform="rotate(32 249 211)"/>
<ellipse cx="230" cy="209" rx="4.9" ry="1.0" fill="#2f6e66" opacity=".7" transform="rotate(20 230 209)"/>
<ellipse cx="170" cy="176" rx="2.1" ry="2.3" fill="#72b09a" opacity=".7" transform="rotate(-36 170 176)"/>
<ellipse cx="255" cy="166" rx="3.3" ry="3.2" fill="#275f62" opacity=".7" transform="rotate(-2 255 166)"/>
<ellipse cx="240" cy="179" rx="2.6" ry="3.2" fill="#275f62" opacity=".7" transform="rotate(-30 240 179)"/>
<ellipse cx="178" cy="175" rx="2.6" ry="3.3" fill="#1f5458" opacity=".7" transform="rotate(-1 178 175)"/>
<ellipse cx="216" cy="181" rx="3.4" ry="1.7" fill="#1f5458" opacity=".7" transform="rotate(2 216 181)"/>
<ellipse cx="199" cy="185" rx="6.1" ry="3.1" fill="#1f5458" opacity=".7" transform="rotate(22 199 185)"/>
<ellipse cx="155" cy="163" rx="6.9" ry="3.1" fill="#2f6e66" opacity=".7" transform="rotate(-33 155 163)"/>
<ellipse cx="208" cy="177" rx="2.4" ry="2.0" fill="#62a08c" opacity=".7" transform="rotate(-9 208 177)"/>
<ellipse cx="185" cy="174" rx="4.1" ry="1.3" fill="#62a08c" opacity=".7" transform="rotate(-40 185 174)"/>
<ellipse cx="233" cy="202" rx="2.9" ry="1.9" fill="#478a7a" opacity=".7" transform="rotate(8 233 202)"/>
<ellipse cx="240" cy="180" rx="2.2" ry="3.2" fill="#1f5458" opacity=".7" transform="rotate(-36 240 180)"/>
<ellipse cx="222" cy="200" rx="4.1" ry="2.7" fill="#62a08c" opacity=".7" transform="rotate(-3 222 200)"/>
<ellipse cx="178" cy="188" rx="4.9" ry="3.0" fill="#72b09a" opacity=".7" transform="rotate(-22 178 188)"/>
<ellipse cx="165" cy="161" rx="3.9" ry="3.2" fill="#62a08c" opacity=".7" transform="rotate(23 165 161)"/>
<ellipse cx="180" cy="185" rx="6.7" ry="2.8" fill="#5a9a88" opacity=".7" transform="rotate(28 180 185)"/>
<ellipse cx="211" cy="180" rx="5.7" ry="2.4" fill="#5a9a88" opacity=".7" transform="rotate(-32 211 180)"/>
<ellipse cx="218" cy="160" rx="3.2" ry="2.0" fill="#275f62" opacity=".7" transform="rotate(2 218 160)"/>
<ellipse cx="215" cy="195" rx="2.9" ry="1.1" fill="#2f6e66" opacity=".7" transform="rotate(27 215 195)"/>
<ellipse cx="164" cy="205" rx="4.4" ry="2.7" fill="#72b09a" opacity=".7" transform="rotate(-17 164 205)"/>
<ellipse cx="184" cy="165" rx="4.8" ry="2.3" fill="#1f5458" opacity=".7" transform="rotate(-21 184 165)"/>
<ellipse cx="214" cy="165" rx="2.3" ry="1.8" fill="#478a7a" opacity=".7" transform="rotate(5 214 165)"/>
<ellipse cx="245" cy="173" rx="5.2" ry="2.1" fill="#275f62" opacity=".7" transform="rotate(16 245 173)"/>
</g>
<ellipse cx="149" cy="105" rx="62" ry="74" fill="#85933f" filter="url(#bl2)"/>
<ellipse cx="145" cy="153" rx="50" ry="40" fill="#5f7d48" filter="url(#bl)" opacity=".85"/>
<g filter="url(#bl1)">
<path d="M143.7 68.8 Q144.0 40.4 158.0 8.0 Q160.6 43.2 151.6 70.1Z" fill="#7a8c44"/>
<path d="M155.1 71.7 Q167.7 43.7 196.0 18.0 Q183.5 54.1 162.6 76.6Z" fill="#7a8c44"/>
<path d="M162.3 76.7 Q178.9 56.0 210.0 44.0 Q192.2 72.2 168.7 84.4Z" fill="#7a8c44"/>
<path d="M169.9 87.5 Q195.7 73.9 232.0 72.0 Q201.6 91.9 172.7 96.1Z" fill="#7a8c44"/>
<path d="M172.4 95.5 Q205.8 87.7 248.0 92.0 Q207.5 104.5 173.2 103.4Z" fill="#7a8c44"/>
<path d="M173.3 105.3 Q207.7 106.9 247.0 124.0 Q204.2 125.4 171.6 114.1Z" fill="#7a8c44"/>
<path d="M172.2 112.6 Q205.4 121.2 240.0 146.0 Q198.1 138.6 168.7 120.9Z" fill="#587a4a"/>
<path d="M170.3 118.5 Q202.4 133.4 232.0 166.0 Q190.7 150.9 164.7 126.8Z" fill="#587a4a"/>
<path d="M166.3 125.5 Q193.3 147.1 212.0 186.0 Q175.9 162.3 158.0 132.8Z" fill="#587a4a"/>
<path d="M160.2 131.6 Q180.6 160.3 190.0 203.0 Q161.8 169.6 151.3 136.0Z" fill="#587a4a"/>
<path d="M153.6 135.3 Q166.0 167.8 166.0 211.0 Q147.6 172.0 144.9 137.2Z" fill="#587a4a"/>
<path d="M149.4 136.6 Q156.6 170.1 150.0 212.0 Q137.8 171.3 140.4 137.2Z" fill="#587a4a"/>
<path d="M143.2 137.3 Q143.3 170.2 128.0 208.0 Q124.6 167.4 134.3 136.0Z" fill="#587a4a"/>
<path d="M140.4 68.9 Q138.5 39.1 146.0 3.0 Q153.2 39.6 147.4 69.1Z" fill="#9a9f38"/>
<path d="M147.5 69.2 Q150.5 37.8 170.0 4.0 Q164.6 41.9 154.3 71.2Z" fill="#b4b236"/>
<path d="M153.2 70.8 Q161.6 46.3 184.0 23.0 Q176.3 54.4 160.2 74.7Z" fill="#9a9f38"/>
<path d="M156.9 72.6 Q180.2 38.4 217.0 3.0 Q196.8 51.2 164.8 78.7Z" fill="#b4b236"/>
<path d="M162.8 77.2 Q180.1 57.1 210.0 43.0 Q190.8 70.0 167.9 83.4Z" fill="#9a9f38"/>
<path d="M168.1 83.4 Q194.9 61.3 239.0 63.0 Q205.7 88.7 173.3 96.4Z" fill="#9a9f38"/>
<path d="M171.6 92.0 Q210.5 81.7 260.0 80.0 Q214.0 100.3 173.3 100.9Z" fill="#b4b236"/>
<path d="M172.9 97.6 Q210.1 91.7 256.0 100.0 Q210.6 110.6 173.1 106.6Z" fill="#9a9f38"/>
<path d="M173.2 103.0 Q209.8 102.7 253.0 116.0 Q207.9 119.4 172.3 111.0Z" fill="#b4b236"/>
<path d="M173.0 108.0 Q210.9 111.0 252.0 134.0 Q206.0 129.3 170.7 116.6Z" fill="#c2be3c"/>
<path d="M172.1 113.3 Q209.9 121.4 246.0 153.0 Q201.0 140.5 167.9 122.4Z" fill="#b4b236"/>
<path d="M168.9 121.3 Q201.2 137.9 227.0 175.0 Q188.0 154.2 162.6 129.0Z" fill="#7a8c44"/>
<path d="M163.8 128.3 Q188.7 153.8 205.0 195.0 Q171.6 166.0 155.7 134.1Z" fill="#7a8c44"/>
<path d="M155.7 134.2 Q168.8 166.6 176.0 209.0 Q152.9 171.8 148.1 136.7Z" fill="#b4b236"/>
<path d="M146.4 137.1 Q150.2 167.8 141.0 205.0 Q133.4 167.4 138.4 136.9Z" fill="#9a9f38"/>
<path d="M159.1 74.3 Q183.7 43.5 214.0 6.0 Q190.4 48.6 162.3 76.8Z" fill="#cfca48"/>
<path d="M172.4 110.2 Q208.6 115.6 250.0 133.0 Q206.5 123.7 171.4 114.1Z" fill="#d2cc4a"/>
<path d="M170.8 116.1 Q205.9 126.8 243.0 152.0 Q202.3 134.4 169.1 119.8Z" fill="#cdc848"/>
<path d="M153.3 135.0 Q163.3 166.7 174.0 206.0 Q156.3 169.0 150.0 136.1Z" fill="#d0ca46"/>
</g>
<ellipse cx="143" cy="103" rx="40" ry="45" fill="#6c6a34" filter="url(#bl2)" opacity=".9"/>
<ellipse cx="143" cy="103" rx="38" ry="43" fill="url(#disc)"/>
<ellipse cx="143" cy="103" rx="30" ry="35" fill="none" stroke="#8a742c" stroke-width="6" stroke-dasharray="1.500 2.500" opacity=".65"/>
<ellipse cx="143" cy="103" rx="34" ry="39" fill="none" stroke="#7a6a2c" stroke-width="4" stroke-dasharray="2 2" opacity=".5"/>
<rect x="0" y="50" width="7" height="163" fill="#7f9a58" opacity=".8"/><rect x="0" y="150" width="7" height="63" fill="#4a8070" opacity=".8"/>
</svg>

<!-- image 2 -->
<svg class="abs" style="left:222px;top:687px" width="265" height="19" viewBox="0 0 265 19"><defs><filter id="b2"><feGaussianBlur stdDeviation="2.200"/></filter></defs><rect width="265" height="19" fill="#2b5c72"/><g filter="url(#b2)"><ellipse cx="40" cy="4" rx="50" ry="8" fill="#1f4a60"/><ellipse cx="150" cy="21" rx="36" ry="11" fill="#b4c0e6"/><ellipse cx="250" cy="10" rx="18" ry="11" fill="#c3bde2"/><ellipse cx="205" cy="6" rx="25" ry="6" fill="#3f7f8a"/><ellipse cx="105" cy="17" rx="16" ry="7" fill="#6aa86e"/><ellipse cx="215" cy="19" rx="18" ry="5" fill="#5a9a6a"/></g></svg>

<div class="abs" id="minitb" style="left:227px;top:284px;width:203px;height:55px"></div>
<div class="abs cbx" style="left:229px;top:286px;width:68px;height:26px"></div>
<div class="abs cbx" style="left:296px;top:286px;width:44px;height:26px"></div>
<div class="darr" style="left:286px;top:297px;border-top-color:#666"></div>
<div class="darr" style="left:329px;top:297px;border-top-color:#666"></div>
<div class="abs ser" style="left:343.500px;top:288px;font-size:18.500px;font-weight:700;line-height:22px;letter-spacing:-1px">A</div>
<div class="abs" style="left:353px;top:291px;width:0;height:0;border-left:3px solid transparent;border-right:3px solid transparent;border-bottom:3px solid #555"></div>
<div class="abs ser" style="left:366.500px;top:293px;font-size:13px;font-weight:700;line-height:16px">A</div>
<div class="darr" style="left:374px;top:293px"></div>
<svg class="abs" style="left:386px;top:290px" width="18" height="16" viewBox="0 0 18 16"><g stroke="#111" stroke-width="2"><path d="M6 3H17M9 7H17M6 11H17"/></g><g stroke="#111" stroke-width="1" stroke-dasharray="1.5 1"><path d="M3 .5H17M3 14.5H17"/></g><path d="M1 7l4-3v2h3v2H5v2z" fill="#4a72c4"/></svg>
<svg class="abs" style="left:408px;top:290px" width="18" height="16" viewBox="0 0 18 16"><g stroke="#111" stroke-width="2"><path d="M6 3H17M9 7H17M6 11H17"/></g><g stroke="#111" stroke-width="1" stroke-dasharray="1.5 1"><path d="M3 .5H17M3 14.5H17"/></g><path d="M8 7l-4-3v2H1v2h3v2z" fill="#4a72c4"/></svg>
<div class="abs ser" style="left:233.500px;top:316.500px;font-size:14px;font-weight:700;line-height:18px;-webkit-text-stroke:.5px #111">B</div>
<div class="abs ser" style="left:257px;top:316.500px;font-size:14px;font-weight:700;font-style:italic;line-height:18px">I</div>
<div class="abs ser" style="left:277.500px;top:316.500px;font-size:14px;font-weight:700;line-height:18px;text-decoration:underline">U</div>
<svg class="abs" style="left:297px;top:318px" width="16" height="14" viewBox="0 0 16 14"><path d="M1 1.5H15M3 4.5H13M1 7.5H15M3 10.5H13M1 13H15" stroke="#111" stroke-width="1.2"/></svg>
<div class="abs" style="left:320px;top:329px;width:15px;height:4px;background:#ffff00"></div>
<div class="abs" style="left:319px;top:314px;font-size:10px;line-height:12px;color:#444;background:#f7f36a;font-weight:700;letter-spacing:-.5px">ab</div>
<svg class="abs" style="left:325px;top:315px" width="12" height="14" viewBox="0 0 12 14"><path d="M1 12l2-4 5-6 2.5 2-5 6z" fill="#d8e2f4" stroke="#445" stroke-width=".8"/><path d="M7 2.5l1.5-1.5 2.5 2-1.5 1.5z" fill="#5a78c8"/></svg>
<div class="darr" style="left:340px;top:324px;border-top-color:#666"></div>
<div class="abs ser" style="left:355px;top:313px;font-size:16px;font-weight:700;line-height:18px;color:#3a4f86">A</div>
<div class="abs" style="left:353px;top:329px;width:16px;height:4px;background:#e01818"></div>
<div class="darr" style="left:374px;top:324px;border-top-color:#666"></div>
<div class="abs" style="left:386px;top:313px;width:19px;text-align:center;font-size:9px;line-height:10px;color:#222;font-weight:700;letter-spacing:-.5px">wén</div>
<div class="abs" style="left:387px;top:321px;width:17px;text-align:center;font-size:13px;line-height:14px;color:#3b5ea8">文</div>
<svg class="abs" style="left:408px;top:317px" width="18" height="17" viewBox="0 0 18 17"><path d="M11 6l4-4.5c1-.8 2.5.6 1.6 1.7L13 7.5z" fill="#6a6aa8" stroke="#447" stroke-width=".5"/><path d="M1.5 11l7-6.5 4.5 4-5.5 7.5z" fill="#e8dc90" stroke="#8a8250" stroke-width=".7"/><path d="M4 12l5-5M6 14l5-6" stroke="#b8aa60" stroke-width=".6"/></svg>


<div class="abs" id="ctx" style="left:227px;top:354px;width:134px;height:339px"></div>
<div class="abs" style="left:253px;top:356px;width:1px;height:335px;background:#e2e4e8"></div>
<div class="abs" style="left:254px;top:406px;width:105px;height:23px;background:#eef0f4"></div>
<div class="abs" style="left:257px;top:431px;width:24px;height:25px;background:#eee9ec;border:1px solid #d8d2d6;border-radius:2px"></div>
<div class="abs dsep" style="left:260px;top:459px;width:98px"></div>
<div class="abs dsep" style="left:260px;top:538px;width:98px"></div>
<div class="abs" style="left:336px;top:594px;width:1px;height:19px;background:#c5c8ce"></div>
<div class="abs" style="left:336px;top:619px;width:1px;height:19px;background:#c5c8ce"></div>
<div class="rarr" style="left:346px;top:599px"></div>
<div class="rarr" style="left:346px;top:624px"></div>
<div class="rarr" style="left:346px;top:649px"></div>
<div class="abs mi" style="left:261px;top:359px">剪切(<u>T</u>)</div>
<div class="abs mi" style="left:261px;top:384px">复制(<u>C</u>)</div>
<div class="abs mi" style="left:261px;top:408px;font-weight:700">粘贴选项:</div>
<div class="abs mi" style="left:261px;top:465px">更新域(<u>U</u>)</div>
<div class="abs mi" style="left:261px;top:490px">编辑域(<u>E</u>)...</div>
<div class="abs mi" style="left:261px;top:515px">切换域代码(<u>T</u>)</div>
<div class="abs mi" style="left:261px;top:544px">字体(<u>F</u>)...</div>
<div class="abs mi" style="left:261px;top:569px">段落(<u>P</u>)...</div>
<div class="abs mi" style="left:261px;top:594px">项目符号(<u>B</u>)</div>
<div class="abs mi" style="left:261px;top:619px">编号(<u>N</u>)</div>
<div class="abs mi" style="left:261px;top:644px">样式(<u>T</u>)</div>
<div class="abs mi" style="left:261px;top:669px">插入符号(<u>S</u>)</div>
<!--MI_START--><svg class="abs" style="left:234px;top:361px" width="11" height="14" viewBox="0 0 11 14"><path d="M2.500 0c.5 3 1.500 5.500 3.500 8M8.500 0c-.5 3-1.500 5.500-3.500 8" stroke="#6d7686" stroke-width="1.500" fill="none"/><circle cx="2.800" cy="10.800" r="2" fill="none" stroke="#3b63b6" stroke-width="1.600"/><circle cx="8.200" cy="10.800" r="2" fill="none" stroke="#3b63b6" stroke-width="1.600"/><path d="M4 8.500l1.500-1.500 1.500 1.500" stroke="#3b63b6" stroke-width="1.400" fill="none"/></svg>
<svg class="abs" style="left:232px;top:385px" width="16" height="14" viewBox="0 0 16 14"><path d="M.5 .5h5l2 2v6.500h-7z" fill="#fff" stroke="#6a7a94" stroke-width="1"/><path d="M2 3.500h3.500M2 5.500h3.500M2 7.500h3.500" stroke="#4f78c8" stroke-width="1"/><path d="M6.500 3.500h5.500l3 3v7h-8.500z" fill="#fff" stroke="#56688a" stroke-width="1"/><path d="M12 3.500v3h3" fill="#dfe6f0" stroke="#56688a" stroke-width=".8"/><path d="M8 7h3M8 9h5.500M8 11h5.500" stroke="#4f78c8" stroke-width="1"/></svg>
<svg class="abs" style="left:232px;top:409px" width="17" height="15" viewBox="0 0 17 15"><rect x=".5" y="2.500" width="11" height="11" rx="1" fill="#cfcfd2" stroke="#b4b4b8" stroke-width="1"/><rect x="3.500" y=".5" width="5" height="3.500" rx=".8" fill="#dadadd" stroke="#ababaf" stroke-width="1"/><path d="M7.500 6.500h5.500l3 3v5h-8.500z" fill="#ececee" stroke="#b4b4b8" stroke-width="1"/><path d="M9 10h5M9 12h5" stroke="#c2c2c6" stroke-width="1"/></svg>
<svg class="abs" style="left:260px;top:433px" width="18" height="21" viewBox="0 0 18 21"><rect x="1.500" y="2.500" width="15" height="17" rx="1" fill="#e3dde1" stroke="#c9c2c7" stroke-width="1"/><rect x="6" y=".5" width="6" height="3.500" rx="1" fill="#e9e4e8" stroke="#bdb6bb" stroke-width="1"/><path d="M5.500 7.500h6l2.500 2.500v8h-8.500z" fill="#f6f3f5" stroke="#b9b3b8" stroke-width="1"/><path d="M7 12h5.500M7 14h5.500M7 16h5.500" stroke="#c6c0c5" stroke-width="1"/></svg>
<svg class="abs" style="left:232px;top:466px" width="16" height="14" viewBox="0 0 16 14"><path d="M.5 .5H8l3 3v9.500H.5z" fill="#fff" stroke="#5f6c82" stroke-width="1"/><path d="M2.500 4H7M2.500 6.200H9M2.500 8.400H9M2.500 10.600H9" stroke="#5a6678" stroke-width="1"/><path d="M12 .5h3.200l-.7 8.500h-1.800z" fill="#d8431f"/><circle cx="13.600" cy="11.500" r="1.500" fill="#d8431f"/></svg>
<div class="abs ser" style="left:233.500px;top:544px;font-size:16px;line-height:18px;font-weight:700;color:#2f4f8f">A</div>
<svg class="abs" style="left:234px;top:571px" width="13" height="14" viewBox="0 0 13 14"><path d="M1 1.500h11M1 4.500h11M1 7.500h7M1 10.500h4" stroke="#1a1a1a" stroke-width="1.300"/><path d="M11.500 6.500v5h-3.500" stroke="#1a1a1a" stroke-width="1.200" fill="none"/><path d="M9 8.800l-3 2.700 3 2.500z" fill="#1a1a1a"/></svg>
<svg class="abs" style="left:233px;top:596px" width="14" height="14" viewBox="0 0 14 14"><circle cx="1.800" cy="2" r="1.500" fill="#3b63b6"/><circle cx="1.800" cy="7" r="1.500" fill="#3b63b6"/><circle cx="1.800" cy="12" r="1.500" fill="#3b63b6"/><path d="M5.500 2H13.500M5.500 7H13.500M5.500 12H13.500" stroke="#1a1a1a" stroke-width="1.300"/></svg>
<svg class="abs" style="left:233px;top:621px" width="14" height="14" viewBox="0 0 14 14"><text x="0" y="4" font-family="Liberation Sans,sans-serif" font-size="4.800" font-weight="700" fill="#3b63b6">1</text><text x="0" y="8.800" font-family="Liberation Sans,sans-serif" font-size="4.800" font-weight="700" fill="#3b63b6">2</text><text x="0" y="13.600" font-family="Liberation Sans,sans-serif" font-size="4.800" font-weight="700" fill="#3b63b6">3</text><path d="M5.500 2H13.500M5.500 7H13.500M5.500 12H13.500" stroke="#1a1a1a" stroke-width="1.300"/></svg>
<div class="abs ser" style="left:231.500px;top:643px;font-size:19px;line-height:20px;color:#2f4f8f">A</div>
<svg class="abs" style="left:238px;top:652px" width="11" height="9" viewBox="0 0 11 9"><path d="M0 8c3-1 5-3 6-5l3 2c-2 2-5 3.500-9 3z" fill="#7fa6e0" stroke="#3b63b6" stroke-width=".6"/><path d="M6 3l3-3 1.500 1.500L9 5z" fill="#e8c860" stroke="#9a7a2a" stroke-width=".5"/></svg>
<!--MI_END-->

<div class="abs" style="left:1007px;top:154px;width:17px;height:552px;background:linear-gradient(to right,#d9dce3,#e3e6eb 40%,#e0e3e9)"></div>
<div class="abs" style="left:1011px;top:159px;width:9px;height:2px;background:#6d7480"></div>
<svg class="abs" style="left:1008px;top:164px" width="15" height="14" viewBox="0 0 15 14"><rect x="1.500" y="1.500" width="6.500" height="7" fill="#fff" stroke="#4a505c" stroke-width="1"/><rect x="5.500" y="4.500" width="8" height="8.500" fill="#fff" stroke="#4a505c" stroke-width="1"/><path d="M3 1.500l1.700 2.500 1.700-2.500M8 9.500l1.500 2.500 1.500-2.500" stroke="#4a505c" fill="#fff" stroke-width=".9"/></svg>
<div class="abs" style="left:1008px;top:180px;width:15px;height:1px;background:#c9cdd4"></div>
<div class="abs" style="left:1011px;top:185px;width:0;height:0;border-left:5px solid transparent;border-right:5px solid transparent;border-bottom:6px solid #3d434e"></div>
<div class="abs" style="left:1007px;top:197px;width:16px;height:105px;border:1px solid #8d939e;border-radius:2px;background:linear-gradient(to right,#f4f6f9,#dfe3ea 60%,#e9ecf1)"></div>
<div class="abs" style="left:1011px;top:245px;width:8px;height:1px;background:#868d99;box-shadow:0 2px 0 #868d99,0 4px 0 #868d99,0 6px 0 #868d99"></div>
<div class="abs" style="left:1011px;top:643px;width:0;height:0;border-left:5px solid transparent;border-right:5px solid transparent;border-top:6px solid #3d434e"></div>
<div class="abs" style="left:1008px;top:654px;width:15px;height:1px;background:#c9cdd4"></div>
<svg class="abs" style="left:1010px;top:657px" width="11" height="11" viewBox="0 0 11 11"><path d="M2 5l3.500-4 3.500 4zM2 10l3.500-4 3.500 4z" fill="#3d434e"/></svg>
<div class="abs" style="left:1011px;top:675px;width:9px;height:9px;border:1.300px solid #4a505c;border-radius:50%"></div>
<svg class="abs" style="left:1010px;top:691px" width="11" height="11" viewBox="0 0 11 11"><path d="M2 1l3.500 4 3.500-4zM2 6l3.500 4 3.500-4z" fill="#3d434e"/></svg>

<div id="statusbar" class="abs"></div>

<div class="abs st" style="left:8px;top:709px">页面: 1/2</div>
<div class="abs ssep" style="left:67px"></div>
<div class="abs st" style="left:77px;top:709px">字数: 56/56</div>
<div class="abs ssep" style="left:150px"></div>
<div class="abs st" style="left:160px;top:709px;letter-spacing:0">中文(中国)</div>
<div class="abs ssep" style="left:225px"></div>
<div class="abs st" style="left:235px;top:709px">插入</div>
<div class="abs ssep" style="left:268px"></div>
<div class="abs ssep" style="left:741px"></div>
<div class="abs" style="left:746px;top:708px;width:20px;height:19px;border:1px solid #e5b93c;border-radius:2px;background:linear-gradient(#fdeeb0,#fbd66e)"></div>
<svg class="abs" style="left:750px;top:712px" width="12" height="11" viewBox="0 0 12 11"><rect x=".5" y=".5" width="11" height="10" fill="#fff" stroke="#444"/><path d="M2 2.500h8M2 4.500h8M2 6.500h8M2 8.500h8" stroke="#333" stroke-width="1"/></svg>
<svg class="abs" style="left:769px;top:712px" width="12" height="11" viewBox="0 0 12 11"><path d="M.5 1.500h4.500l1 1 1-1h4.500v7h-4.500l-1 1.500-1-1.500h-4.500z" fill="#fff" stroke="#555" stroke-width=".9"/><path d="M6 2.500v7.500M2 3.500h2.500M2 5.500h2.500M7.500 3.500h2.500M7.500 5.500h2.500" stroke="#666" stroke-width=".8"/></svg>
<svg class="abs" style="left:786px;top:712px" width="13" height="12" viewBox="0 0 13 12"><rect x=".5" y=".5" width="9" height="8" fill="#fff" stroke="#555"/><path d="M2 2.500h6M2 4.500h6M2 6.500h3" stroke="#666" stroke-width=".9"/><circle cx="9" cy="8" r="2.800" fill="#3f9f8a" stroke="#2a6a8a" stroke-width=".6"/></svg>
<svg class="abs" style="left:805px;top:712px" width="11" height="10" viewBox="0 0 11 10"><path d="M1 1.500h2M4 1.500h6M3 3.500h7M3 5.500h7M3 7.500h7M1 9.500h2M4 9.500h5" stroke="#555" stroke-width="1" stroke-dasharray="2 .7"/></svg>
<svg class="abs" style="left:823px;top:712px" width="12" height="10" viewBox="0 0 12 10"><path d="M1 1.500h10M1 3.500h10M1 5.500h10M1 7.500h10M1 9.500h10" stroke="#555" stroke-width="1"/></svg>
<div class="abs st" style="left:848px;top:709px;font-size:12.500px">100%</div>
<div class="abs" style="left:902px;top:716px;width:104px;height:1px;background:#8a909b"></div>
<div class="abs zc" style="left:888px;top:709px"></div>
<div class="abs" style="left:892px;top:716px;width:8px;height:2px;background:#555"></div>
<div class="abs zc" style="left:1005px;top:709px"></div>
<div class="abs" style="left:1009px;top:716px;width:8px;height:2px;background:#555"></div>
<div class="abs" style="left:1012px;top:713px;width:2px;height:8px;background:#555"></div>
<svg class="abs" style="left:949px;top:709px" width="11" height="14" viewBox="0 0 11 14"><path d="M1.500 1.500h8v7l-4 4.500-4-4.500z" fill="#f2f3f5" stroke="#6d737e" stroke-width="1"/></svg>

<div id="taskbar" class="abs"></div>

<div class="abs" style="left:740px;top:728px;width:90px;height:40px;background:linear-gradient(105deg,rgba(255,255,255,0) 30%,rgba(170,200,235,.38) 48%,rgba(255,255,255,0) 62%)"></div>
<div class="abs" style="left:8px;top:730px;width:37px;height:36px;border-radius:50%;background:radial-gradient(ellipse 70% 45% at 50% 100%,#5fd0f4 0,#38a4dc 45%,rgba(40,120,180,0) 100%),radial-gradient(ellipse 80% 50% at 50% 8%,#8fb8d8 0,#4f86b4 50%,rgba(40,90,140,0) 100%),#1f5888;border:1px solid #9cc4e0;box-shadow:0 0 0 1px #1a4670,0 0 4px rgba(150,210,255,.6)"></div>
<svg class="abs" style="left:15px;top:736px" width="24" height="24" viewBox="0 0 24 24"><path d="M3 6c3-1.500 5-1.500 8 0l-1.500 5.500c-2.500-1.200-4.500-1.200-7 0z" fill="#e8542c"/><path d="M12.500 6.500c3 1.500 5 1.500 8 0l-1.500 5.500c-3 1.500-5 1.500-8 0z" fill="#7cc043"/><path d="M2 13c3-1.500 5-1.500 8 0l-1.500 5.500c-2.500-1.200-4.500-1.200-7 0z" fill="#3fa0e6"/><path d="M11.500 13.500c3 1.500 5 1.500 8 0l-1.500 5.500c-3 1.500-5 1.500-8 0z" fill="#f6c62d"/></svg>
<svg class="abs" style="left:72px;top:731px" width="36" height="34" viewBox="0 0 36 34"><defs><linearGradient id="qg" x1="1" y1="0" x2="0" y2="1"><stop offset="0" stop-color="#1f86ee"/><stop offset=".6" stop-color="#3f9ef4"/><stop offset="1" stop-color="#a8d8ff"/></linearGradient></defs><circle cx="17.500" cy="16" r="11.500" fill="none" stroke="url(#qg)" stroke-width="7.500"/><path d="M15 32.500a5 5 0 0 1 1.500-9.500 6.500 6.500 0 0 1 11.500-.5 4.800 4.800 0 0 1 2 10z" fill="#fff"/></svg>
<div class="abs tbtn" style="left:123px;top:729px;width:158px"></div>
<div class="abs tbtn act" style="left:284px;top:729px;width:159px"></div>
<svg class="abs" style="left:131px;top:731px" width="27" height="34" viewBox="0 0 27 34"><defs><linearGradient id="fg" x1="0" y1="0" x2="1" y2="0"><stop offset="0" stop-color="#f6e39a"/><stop offset="1" stop-color="#e6c869"/></linearGradient></defs><path d="M3 4l7-2.500 1 1.500v28l-6-3.500z" fill="#f3dc8c" stroke="#c9a850" stroke-width=".8"/><path d="M11 6l3-3.500 9 1.500v22l-12 6.500z" fill="url(#fg)" stroke="#c9a850" stroke-width=".8"/><path d="M11 6.500v25" stroke="#d2b25c" stroke-width="1"/><rect x="21" y="22" width="2.500" height="5" fill="#f8f0c8" stroke="#c9a850" stroke-width=".5"/></svg>
<svg class="abs" style="left:292px;top:730px" width="32" height="32" viewBox="0 0 32 32"><defs><linearGradient id="wg" x1="0" y1="0" x2="1" y2="1"><stop offset="0" stop-color="#7fa8de"/><stop offset=".5" stop-color="#c9dcf2"/><stop offset="1" stop-color="#f4f8fc"/></linearGradient></defs><rect x="1.500" y="1.500" width="28" height="29" rx="3" fill="#fdfefe" stroke="#4a6a94" stroke-width=".8"/><rect x="3.500" y="3.500" width="24" height="25" rx="1.500" fill="url(#wg)"/><path d="M10 22l18-5 2 9-19 4z" fill="#fff" stroke="#c5cfdd" stroke-width=".6"/><path d="M13 24.500l13-3.500M14 27l13-3.500" stroke="#c0cad8" stroke-width=".8"/><text x="14" y="22" font-family="Liberation Sans,sans-serif" font-weight="700" font-size="21" text-anchor="middle" fill="#1f4f9f" stroke="#1f4f9f" stroke-width=".6">W</text></svg>
<div class="abs tk" style="left:166px;top:738px;font-size:12.700px">Word导学实验10...</div>
<div class="abs tk" style="left:329px;top:738px">文档1 - Microso...</div>
<svg class="abs" style="left:819px;top:739px" width="19" height="17" viewBox="0 0 19 17"><path d="M6 5c2-3 6-4 9-3" stroke="#cfd6e0" fill="none" stroke-width="1"/><rect x="1" y="6" width="17" height="10" rx="1.500" fill="#dfe3e8" stroke="#8b929d" stroke-width=".8"/><path d="M3 9h13M3 11h13M5 13.500h9" stroke="#7a8390" stroke-width="1.200" stroke-dasharray="1.500 1"/></svg>
<svg class="abs" style="left:845px;top:733px" width="14" height="22" viewBox="0 0 14 22"><rect x="3.500" y="3.500" width="6" height="5" fill="none" stroke="#fff" stroke-width="1.200"/><path d="M5.500 1.500h6v5" fill="none" stroke="#fff" stroke-width="1.200"/><path d="M3.500 16l3 3 3-3z" fill="#fff"/></svg>
<div class="abs" style="left:865px;top:744px;width:0;height:0;border-left:4.500px solid transparent;border-right:4.500px solid transparent;border-bottom:5px solid #fff"></div>
<svg class="abs" style="left:885px;top:738px" width="20" height="20" viewBox="0 0 20 20"><rect x="5.500" y="5.500" width="12" height="9" fill="#1d4f8c" stroke="#fff" stroke-width="1.400"/><path d="M8 18h7M11.500 15v3" stroke="#fff" stroke-width="1.400"/><path d="M2 2.500h4v6H2z" fill="#fff"/><path d="M3 1v2M5 1v2M4 8.500v4h2" stroke="#fff" stroke-width="1.200" fill="none"/></svg>
<svg class="abs" style="left:912px;top:739px" width="18" height="18" viewBox="0 0 18 18"><path d="M2 6.500h3l4-4v13l-4-4H2z" fill="#fff"/><path d="M11.500 5.500c1.500 2 1.500 5 0 7" stroke="#fff" fill="none" stroke-width="1.200"/></svg>
<div class="abs tk" style="left:942px;top:730px;width:60px;text-align:center;font-size:12.500px;line-height:18px">10:34</div>
<div class="abs tk" style="left:938px;top:749px;width:68px;text-align:center;font-size:13.400px;line-height:18px">2015/6/26</div>
<div class="abs" style="left:1010px;top:729px;width:14px;height:39px;border:1px solid rgba(150,175,210,.7);border-right:none;background:linear-gradient(to right,rgba(110,150,200,.5),rgba(40,85,145,.4))"></div>

</body>
</html>
